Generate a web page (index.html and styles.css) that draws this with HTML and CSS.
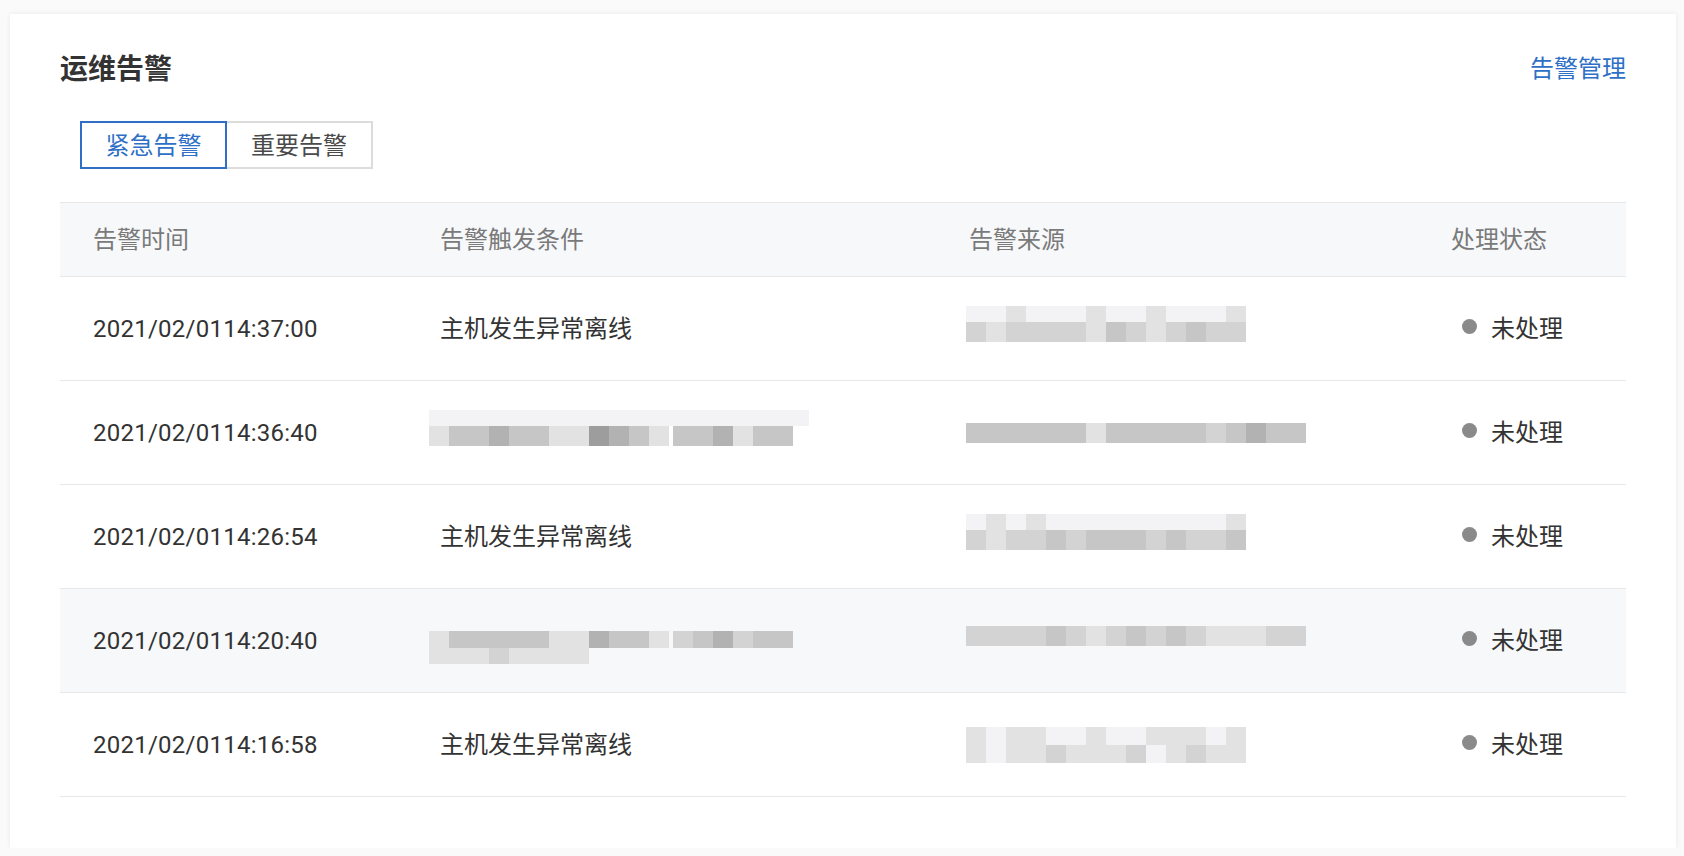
FILE: index.html
```html
<!DOCTYPE html>
<html lang="zh-CN">
<head>
<meta charset="utf-8">
<title>运维告警</title>
<link rel="stylesheet" href="styles.css">
</head>
<body>
<div class="card">
  <div class="card-head">
    <h2 class="title">运维告警</h2>
    <a class="manage-link" href="#">告警管理</a>
  </div>
  <div class="tabs">
    <div class="tab tab-active">紧急告警</div>
    <div class="tab tab-normal">重要告警</div>
  </div>
  <div class="table">
    <div class="tr thead">
      <div class="td cjk">告警时间</div>
      <div class="td cjk">告警触发条件</div>
      <div class="td cjk">告警来源</div>
      <div class="td cjk">处理状态</div>
    </div>

    <div class="tr">
      <div class="td time">2021/02/0114:37:00</div>
      <div class="td cjk">主机发生异常离线</div>
      <div class="td src">
        <div class="mosaic mosaic-up">
          <div class="band band-thin"><span class="c s0"></span><span class="c s0"></span><span class="c s1"></span><span class="c s0"></span><span class="c s0"></span><span class="c s0"></span><span class="c s1"></span><span class="c s0"></span><span class="c s0"></span><span class="c s1"></span><span class="c s0"></span><span class="c s0"></span><span class="c s0"></span><span class="c s1"></span></div>
          <div class="band"><span class="c s2"></span><span class="c s1"></span><span class="c s2"></span><span class="c s2"></span><span class="c s2"></span><span class="c s2"></span><span class="c s1"></span><span class="c s3"></span><span class="c s2"></span><span class="c s1"></span><span class="c s2"></span><span class="c s3"></span><span class="c s2"></span><span class="c s2"></span></div>
        </div>
      </div>
      <div class="td status cjk"><span class="dot"></span>未处理</div>
    </div>

    <div class="tr">
      <div class="td time">2021/02/0114:36:40</div>
      <div class="td cond">
        <div class="mosaic mosaic-up">
          <div class="band band-thin"><span class="c s0"></span><span class="c s0"></span><span class="c s0"></span><span class="c s0"></span><span class="c s0"></span><span class="c s0"></span><span class="c s0"></span><span class="c s0"></span><span class="c s0"></span><span class="c s0"></span><span class="c s0"></span><span class="c s0"></span><span class="c s0"></span><span class="c s0"></span><span class="c s0"></span><span class="c s0"></span><span class="c s0"></span><span class="c s0"></span><span class="c s0"></span></div>
          <div class="band"><span class="c s1"></span><span class="c s3"></span><span class="c s3"></span><span class="c s4"></span><span class="c s3"></span><span class="c s3"></span><span class="c s1"></span><span class="c s1"></span><span class="c s5"></span><span class="c s4"></span><span class="c s3"></span><span class="c s1"></span><span class="c gap"></span><span class="c s3"></span><span class="c s3"></span><span class="c s4"></span><span class="c s1"></span><span class="c s3"></span><span class="c s3"></span></div>
        </div>
      </div>
      <div class="td src">
        <div class="mosaic">
          <div class="band"><span class="c s3"></span><span class="c s3"></span><span class="c s3"></span><span class="c s3"></span><span class="c s3"></span><span class="c s3"></span><span class="c s1"></span><span class="c s3"></span><span class="c s3"></span><span class="c s3"></span><span class="c s3"></span><span class="c s3"></span><span class="c s2"></span><span class="c s3"></span><span class="c s4"></span><span class="c s3"></span><span class="c s3"></span></div>
        </div>
      </div>
      <div class="td status cjk"><span class="dot"></span>未处理</div>
    </div>

    <div class="tr">
      <div class="td time">2021/02/0114:26:54</div>
      <div class="td cjk">主机发生异常离线</div>
      <div class="td src">
        <div class="mosaic mosaic-up">
          <div class="band band-thin"><span class="c s0"></span><span class="c s1"></span><span class="c s0"></span><span class="c s1"></span><span class="c s0"></span><span class="c s0"></span><span class="c s0"></span><span class="c s0"></span><span class="c s0"></span><span class="c s0"></span><span class="c s0"></span><span class="c s0"></span><span class="c s0"></span><span class="c s1"></span></div>
          <div class="band"><span class="c s2"></span><span class="c s1"></span><span class="c s2"></span><span class="c s2"></span><span class="c s3"></span><span class="c s2"></span><span class="c s3"></span><span class="c s3"></span><span class="c s3"></span><span class="c s2"></span><span class="c s3"></span><span class="c s2"></span><span class="c s2"></span><span class="c s3"></span></div>
        </div>
      </div>
      <div class="td status cjk"><span class="dot"></span>未处理</div>
    </div>

    <div class="tr tr-hover">
      <div class="td time">2021/02/0114:20:40</div>
      <div class="td cond">
        <div class="mosaic mosaic-down">
          <div class="band band-short"><span class="c s1"></span><span class="c s3"></span><span class="c s3"></span><span class="c s3"></span><span class="c s3"></span><span class="c s3"></span><span class="c s1"></span><span class="c s1"></span><span class="c s4"></span><span class="c s3"></span><span class="c s3"></span><span class="c s1"></span><span class="c gap"></span><span class="c s2"></span><span class="c s3"></span><span class="c s4"></span><span class="c s2"></span><span class="c s3"></span><span class="c s3"></span></div>
          <div class="band band-thin"><span class="c s1"></span><span class="c s1"></span><span class="c s1"></span><span class="c s2"></span><span class="c s1"></span><span class="c s1"></span><span class="c s1"></span><span class="c s1"></span></div>
        </div>
      </div>
      <div class="td src">
        <div class="mosaic mosaic-up">
          <div class="band"><span class="c s2"></span><span class="c s2"></span><span class="c s2"></span><span class="c s2"></span><span class="c s3"></span><span class="c s2"></span><span class="c s1"></span><span class="c s2"></span><span class="c s3"></span><span class="c s2"></span><span class="c s3"></span><span class="c s2"></span><span class="c s1"></span><span class="c s1"></span><span class="c s1"></span><span class="c s2"></span><span class="c s2"></span></div>
        </div>
      </div>
      <div class="td status cjk"><span class="dot"></span>未处理</div>
    </div>

    <div class="tr">
      <div class="td time">2021/02/0114:16:58</div>
      <div class="td cjk">主机发生异常离线</div>
      <div class="td src">
        <div class="mosaic">
          <div class="band band-mid"><span class="c s1"></span><span class="c s0"></span><span class="c s1"></span><span class="c s1"></span><span class="c s0"></span><span class="c s0"></span><span class="c s1"></span><span class="c s0"></span><span class="c s0"></span><span class="c s1"></span><span class="c s1"></span><span class="c s1"></span><span class="c s0"></span><span class="c s1"></span></div>
          <div class="band band-mid"><span class="c s1"></span><span class="c s0"></span><span class="c s1"></span><span class="c s1"></span><span class="c s2"></span><span class="c s1"></span><span class="c s1"></span><span class="c s1"></span><span class="c s2"></span><span class="c s0"></span><span class="c s1"></span><span class="c s2"></span><span class="c s1"></span><span class="c s1"></span></div>
        </div>
      </div>
      <div class="td status cjk"><span class="dot"></span>未处理</div>
    </div>
  </div>
</div>
</body>
</html>
```

FILE: styles.css
```css
html, body {
  margin: 0;
  padding: 0;
}
body {
  background: #fafafb;
  font-family: Roboto, "Noto Sans CJK SC", sans-serif;
  color: #333;
}
.card {
  box-sizing: border-box;
  margin: 14px 0 0 10px;
  width: 1666px;
  height: 834px;
  background: #fff;
  box-shadow: 0 0 5px rgba(0, 0, 0, 0.07);
  padding: 38px 50px 0 50px;
}
.card-head {
  display: flex;
  justify-content: space-between;
  align-items: center;
  height: 30px;
}
.title {
  margin: 0;
  font-size: 28px;
  line-height: 30px;
  font-weight: 700;
  color: #333;
  font-family: "Noto Sans CJK SC", sans-serif;
}
.manage-link {
  font-size: 24px;
  line-height: 30px;
  color: #2f70c6;
  text-decoration: none;
  font-family: "Noto Sans CJK SC", sans-serif;
}
.tabs {
  display: flex;
  margin: 39px 0 0 20px;
}
.tab {
  box-sizing: border-box;
  height: 48px;
  line-height: 42px;
  padding-bottom: 2px;
  font-size: 24px;
  text-align: center;
  font-family: "Noto Sans CJK SC", sans-serif;
}
.tab-active {
  width: 147px;
  border: 2px solid #2f70c6;
  color: #2f70c6;
}
.tab-normal {
  width: 146px;
  border: 2px solid #dcdcdc;
  border-left: none;
  color: #4a4a4a;
}
.table {
  margin-top: 33px;
}
.tr {
  display: grid;
  grid-template-columns: 347px 529px 482px 1fr;
  align-items: center;
  box-sizing: border-box;
  height: 104px;
  border-bottom: 1px solid #e8e8e8;
  font-size: 24px;
}
.thead {
  height: 75px;
  border-top: 1px solid #e8e8e8;
  background: #f7f8fa;
  color: #7a7a7a;
}
.tr-hover {
  background: #f7f8fa;
}
.td {
  padding-left: 33px;
  white-space: nowrap;
}
.cjk {
  padding-bottom: 4px;
}
.time {
  letter-spacing: 0.25px;
  color: #333;
}
.cond {
  padding-left: 22px;
}
.src {
  padding-left: 30px;
}
.status {
  display: flex;
  align-items: center;
  padding-left: 44px;
  color: #333;
}
.dot {
  width: 15px;
  height: 15px;
  border-radius: 50%;
  background: #8a8a8a;
  margin-right: 14px;
}
.mosaic {
  display: flex;
  flex-direction: column;
}
.mosaic-up {
  margin-top: -10px;
}
.mosaic-down {
  margin-top: 14px;
}
.band {
  display: flex;
  height: 20px;
}
.band-thin {
  height: 16px;
}
.band-short {
  height: 17px;
}
.band-mid {
  height: 18px;
}
.c {
  width: 20px;
  height: 100%;
}
.gap {
  width: 4px;
}
.s0 { background: #f3f3f5; }
.s1 { background: #e2e2e3; }
.s2 { background: #d3d3d4; }
.s3 { background: #c6c6c7; }
.s4 { background: #b2b2b3; }
.s5 { background: #9d9d9e; }
```
